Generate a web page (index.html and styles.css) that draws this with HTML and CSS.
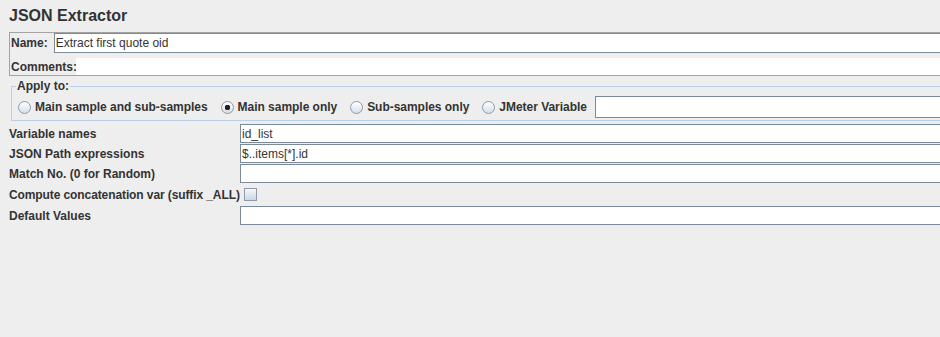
FILE: index.html
```html
<!DOCTYPE html>
<html lang="en">
<head>
  <meta charset="UTF-8" />
  <title>JSON Extractor</title>
  <link rel="stylesheet" href="styles.css">
</head>
<body>
  <div class="editor">
    <h1 class="title">JSON Extractor</h1>

    <div class="name-box">
      <div class="name-row">
        <label for="name">Name:</label>
        <input type="text" id="name" class="field" value="Extract first quote oid" />
      </div>
      <div class="comments-row">
        <label>Comments:</label>
        <div class="comments"></div>
      </div>
    </div>

    <fieldset class="apply">
      <legend>Apply to:</legend>
      <div class="apply-row">
        <label class="option"><input type="radio" name="scope" /> Main sample and sub-samples</label>
        <label class="option"><input type="radio" name="scope" checked /> Main sample only</label>
        <label class="option"><input type="radio" name="scope" /> Sub-samples only</label>
        <label class="option"><input type="radio" name="scope" /> JMeter Variable</label>
        <input type="text" class="field var-field" />
      </div>
    </fieldset>

    <div class="params">
      <div class="param">
        <label>Variable names</label>
        <input type="text" class="field" value="id_list" />
      </div>
      <div class="param">
        <label>JSON Path expressions</label>
        <input type="text" class="field" value="$..items[*].id" />
      </div>
      <div class="param">
        <label>Match No. (0 for Random)</label>
        <input type="text" class="field" />
      </div>
      <div class="param check">
        <label>Compute concatenation var (suffix _ALL)</label>
        <input type="checkbox" class="box" />
      </div>
      <div class="param">
        <label>Default Values</label>
        <input type="text" class="field" />
      </div>
    </div>
  </div>
</body>
</html>
```

FILE: styles.css
```css
/* Base */
body {
  margin: 0;
  background-color: #eeeeee;
  font-family: "Liberation Sans", Arial, sans-serif;
  font-size: 12px;
  color: #333333;
  overflow: hidden;
}
.editor {
  padding-left: 9px;
  margin-right: -20px;
}
.title {
  margin: 6px 0;
  font-size: 16px;
  line-height: 20px;
  font-weight: bold;
}
label {
  font-weight: bold;
  white-space: nowrap;
}

/* Text fields */
.field {
  flex: 1;
  min-width: 0;
  height: 20px;
  box-sizing: border-box;
  margin: 0;
  padding: 0 1px;
  border: 1px solid #7a8a99;
  background-color: #ffffff;
  font-family: "Liberation Sans", Arial, sans-serif;
  font-size: 12px;
  color: #333333;
  outline: none;
}

/* Name / comments */
.name-box {
  border: 1px solid #a3a3a3;
  padding-left: 1px;
}
.name-row {
  display: flex;
  align-items: center;
  gap: 6px;
  height: 20px;
}
.comments-row {
  display: flex;
  align-items: center;
  height: 17px;
  margin-top: 5px;
}
.comments {
  flex: 1;
  height: 17px;
  margin-left: -1px;
  background-color: #ffffff;
}

/* Apply to */
.apply {
  margin: 3px 0 0 2px;
  padding: 3px 0 2px 0;
  border: 1px solid #b8cfe5;
}
.apply legend {
  margin-left: 4px;
  padding: 0 1px;
  line-height: 14px;
  font-weight: bold;
}
.apply-row {
  display: flex;
  align-items: center;
  height: 22px;
  padding-left: 6px;
}
.option {
  display: flex;
  align-items: center;
  gap: 4px;
  margin-right: 13px;
  letter-spacing: -0.03px;
}
.option input {
  appearance: none;
  width: 13px;
  height: 13px;
  margin: 0;
  border: 1px solid #8e9aa7;
  border-radius: 50%;
  background: linear-gradient(#ffffff, #d3dfeb);
}
.option input:checked {
  background: radial-gradient(circle, #222222 0 2.5px, transparent 3px),
              linear-gradient(#ffffff, #d3dfeb);
}
.var-field {
  height: 22px;
  margin-left: -5px;
}

/* Parameters */
.params {
  margin-top: 3px;
}
.param {
  display: flex;
  align-items: center;
  height: 19px;
  margin-bottom: 1px;
}
.param label {
  width: 231px;
  flex: none;
}
.param .field {
  height: 19px;
}
.param.check {
  height: 21px;
}
.param.check label {
  width: auto;
  letter-spacing: -0.1px;
}
.box {
  appearance: none;
  width: 13px;
  height: 13px;
  margin: 0 0 0 4px;
  border: 1px solid #8e9aa7;
  background: linear-gradient(#f4f7fa, #cad8e6);
}
```
